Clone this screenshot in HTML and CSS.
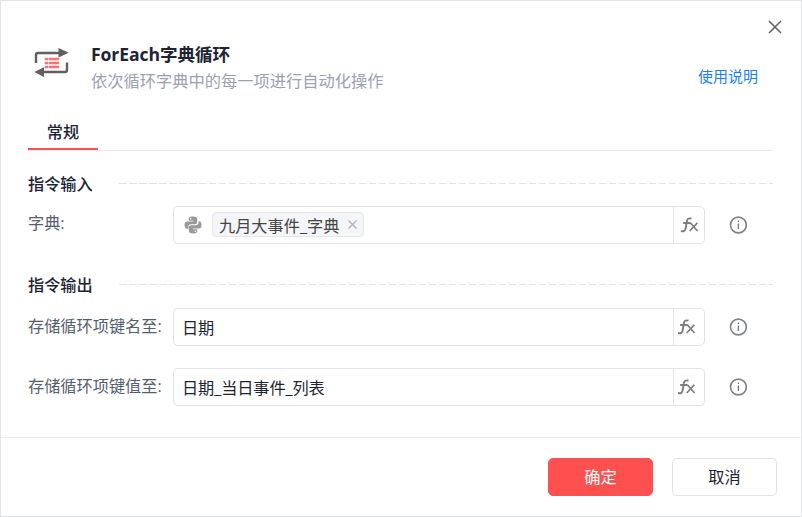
FILE: index.html
```html
<!doctype html>
<html lang="zh-CN">
<head>
  <title>ForEach字典循环</title>
  <meta charset="utf-8">
  <link rel="stylesheet" href="styles.css">
</head>
<body>
  <svg class="defs" width="0" height="0">
    <symbol id="fx" viewBox="0 0 20 18">
      <path d="M1 15c2.800.8 4.300-.2 4.700-3L6.800 5.500C7.200 2.700 8.600 1.900 11.500 2.700M3.200 7H10.500" fill="none" stroke="#7d7d7d" stroke-width="1.900"/>
      <path d="M10.300 6.800l7.200 8.200M17.300 6.800l-7.600 8.200" fill="none" stroke="#7d7d7d" stroke-width="1.700"/>
    </symbol>
    <symbol id="info" viewBox="0 0 18 18">
      <circle cx="9.400" cy="9" r="7.900" fill="none" stroke="#80838b" stroke-width="1.600"/>
      <path d="M9.400 4.500v1.500M9.400 7.500v5.500" stroke="#74777f" stroke-width="1.300"/>
    </symbol>
  </svg>
  <div class="dialog">
    <div class="header">
      <svg class="logo" width="36" height="32" viewBox="0 0 36 32">
        <path d="M2 16V8Q2 6 4 6H26M33 15.500v7.500q0 2-2 2H9" fill="none" stroke="#606060" stroke-width="2.400"/>
        <path d="M24.500 1L34.700 5.700 24.500 10.500zM10 20.200L.3 25l9.700 5z" fill="#606060"/>
        <path d="M11 11h3v2h-3zM15 11h10v2H15zM11 15h3v2h-3zM15 15h10v2H15zM11 19h3v2h-3zM15 19h10v2H15z" fill="#ff7070" stroke="#ff7070" stroke-width=".5"/>
      </svg>
      <div class="heading">
        <h1>ForEach字典循环</h1>
        <p>依次循环字典中的每一项进行自动化操作</p>
      </div>
      <div class="header-side">
        <svg class="close" width="14" height="14" viewBox="0 0 14 14"><path d="M1 1l12 12M13 1L1 13" stroke="#606060" stroke-width="1.500"/></svg>
        <a href="#">使用说明</a>
      </div>
    </div>
    <div class="tabs"><span class="tab active">常规</span></div>
    <div class="content">
      <h2>指令输入</h2>
      <div class="row first">
        <label>字典:</label>
        <div class="field">
          <div class="value">
            <svg class="python" width="18" height="18" viewBox="0 0 18 18">
              <path d="M8.800.5C5.500.5 4.800 1.700 4.800 3v1.700h4.400v.7H3C1.200 5.400.5 7 .5 9s.8 3.700 2.400 3.700h1.500v-2c0-1.500 1.200-2.500 2.600-2.500h4c1.300 0 2.200-1 2.200-2.200V3c0-1.500-1.300-2.500-4.400-2.500z" fill="#999"/>
              <path d="M9.200 17.500c3.300 0 4-1.200 4-2.500v-1.700H8.800v-.7H15c1.800 0 2.500-1.600 2.500-3.600s-.8-3.700-2.400-3.700h-.6v1.500c0 1.500-1.200 2.500-2.600 2.500H7c-1.300 0-2.200 1-2.200 2.200V15c0 1.500 1.300 2.500 4.400 2.500z" fill="#999"/>
              <circle cx="6.700" cy="2.800" r=".8" fill="#fff"/><circle cx="11.300" cy="15.200" r=".8" fill="#fff"/>
            </svg>
            <span class="tag">九月大事件_字典<svg width="9" height="9" viewBox="0 0 9 9"><path d="M.5.5l8 8M8.500.5l-8 8" stroke="#b0b0b3" stroke-width="1.200"/></svg></span>
          </div>
          <div class="fx fx-first"><svg width="20" height="18"><use href="#fx"/></svg></div>
        </div>
        <svg class="info" width="18" height="18"><use href="#info"/></svg>
      </div>
      <h2 class="output">指令输出</h2>
      <div class="row">
        <label>存储循环项键名至:</label>
        <div class="field">
          <div class="value">日期</div>
          <div class="fx"><svg width="20" height="18"><use href="#fx"/></svg></div>
        </div>
        <svg class="info" width="18" height="18"><use href="#info"/></svg>
      </div>
      <div class="row">
        <label>存储循环项键值至:</label>
        <div class="field">
          <div class="value">日期_当日事件_列表</div>
          <div class="fx"><svg width="20" height="18"><use href="#fx"/></svg></div>
        </div>
        <svg class="info" width="18" height="18"><use href="#info"/></svg>
      </div>
    </div>
    <div class="footer">
      <button class="ok">确定</button>
      <button>取消</button>
    </div>
  </div>
</body>
</html>
```
FILE: styles.css
```css
* {
  box-sizing: border-box;
}
body {
  margin: 0;
  font-family: "Open Sans", "Noto Sans CJK SC", sans-serif;
  font-size: 16.2px;
  color: #1c2433;
}
h1, h2, p {
  margin: 0;
}
svg {
  display: block;
  flex: none;
}
.defs {
  position: absolute;
}
.dialog {
  display: flex;
  flex-direction: column;
  width: 802px;
  height: 517px;
  border: 1px solid #e3e4e8;
  background: #fff;
}
.header {
  display: flex;
  height: 113px;
  padding: 19px 19px 0 33px;
}
.logo {
  margin-top: 27px;
}
.heading {
  flex: 1;
  margin: 20px 0 0 21px;
}
.heading h1 {
  font-size: 17.6px;
  line-height: 28px;
  letter-spacing: -0.1px;
}
.heading p {
  font-size: 16.25px;
  line-height: 26px;
  color: #9aa1b3;
}
.header-side {
  display: flex;
  flex-direction: column;
  align-items: flex-end;
}
.header-side a {
  margin: 31px 24px 0 0;
  font-size: 15px;
  line-height: 22px;
  color: #1c80f5;
  text-decoration: none;
}
.tabs {
  display: flex;
  height: 37px;
  margin: 0 28px 0 27px;
  border-bottom: 1px solid #ebecf1;
}
.tab {
  width: 70px;
  height: 36px;
  line-height: 36px;
  text-align: center;
  font-weight: 500;
}
.active {
  border-bottom: 2px solid #ff5050;
}
.content {
  flex: 1;
  padding: 20px 28px 0 27px;
}
h2 {
  display: flex;
  align-items: center;
  height: 27px;
  padding-bottom: 4px;
  font-size: 16.2px;
  font-weight: 500;
}
h2::after {
  content: "";
  flex: 1;
  height: 1px;
  margin: 1px 0 0 26px;
  background: repeating-linear-gradient(90deg, #e3e4e7 0 7.5px, #fff 7.5px 10px);
}
.row {
  display: flex;
  align-items: center;
  height: 38px;
  margin: 8px 0 22px;
}
.output {
  margin-top: 28px;
}
.output + .row {
  margin-top: 9px;
}
.row label {
  width: 145px;
  padding-bottom: 4px;
  white-space: nowrap;
  color: #535e70;
}
.first label {
  padding-bottom: 6px;
}
.field {
  display: flex;
  width: 532px;
  height: 38px;
  border: 1px solid #e2e3e9;
  border-radius: 5px;
}
.value {
  display: flex;
  flex: 1;
  align-items: center;
  padding: 0 0 0 8px;
  letter-spacing: -0.1px;
}
.python {
  margin: 0 10px 0 2px;
}
.tag {
  display: flex;
  align-items: center;
  justify-content: space-between;
  width: 152px;
  height: 25px;
  margin-top: -1px;
  padding: 0 6px;
  border: 1px solid #e4e6eb;
  border-radius: 4px;
  background: #f4f5f8;
  letter-spacing: 0;
  color: #444;
  white-space: nowrap;
}
.fx {
  display: flex;
  align-items: center;
  width: 31px;
  padding-left: 3px;
  border-left: 1px solid #e2e3e9;
}
.fx-first {
  padding-left: 6px;
}
.info {
  margin-left: 24px;
}
.footer {
  display: flex;
  justify-content: flex-end;
  gap: 19px;
  height: 79px;
  padding: 20px 24px 0 0;
  border-top: 1px solid #ebecf1;
}
button {
  width: 105px;
  height: 38px;
  padding: 0 0 2px;
  border: 1px solid #e2e3e9;
  border-radius: 5px;
  background: #fff;
  font: inherit;
  color: #1c2433;
}
.ok {
  border-color: #ff5050;
  background: #ff5050;
  color: #fff;
}
```
